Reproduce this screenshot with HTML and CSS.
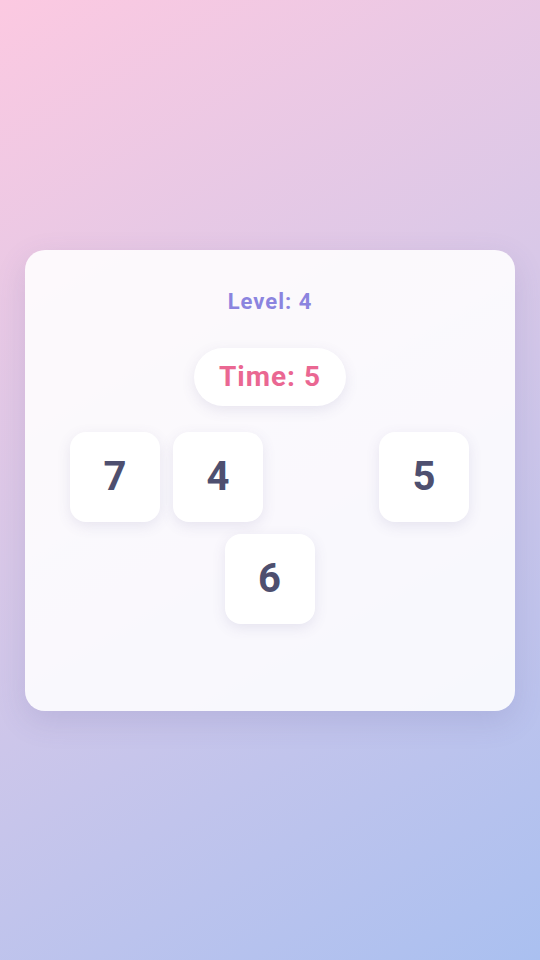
FILE: index.html
```html
<!DOCTYPE html>
<html lang="en">
<head>
  <meta charset="UTF-8" />
  <meta name="viewport" content="width=device-width, initial-scale=1.0"/>
  <title>Number Memory</title>
  <link rel="stylesheet" href="styles.css">
</head>
<body>

<div class="card">
  <div class="level">Level: 4</div>
  <div class="timer">Time: 5</div>
  <div class="tiles">
    <div class="tile">7</div>
    <div class="tile">4</div>
    <div class="tile empty"></div>
    <div class="tile">5</div>
    <div class="tile">6</div>
  </div>
</div>

</body>
</html>
```
FILE: styles.css
```css
body {
  font-family: Roboto, "Liberation Sans", sans-serif;
  background: linear-gradient(150deg, #fcc9e1 0%, #d8c8e8 45%, #aac0f0 100%);
  margin: 0;
  height: 960px;
  display: flex;
  justify-content: center;
  align-items: center;
}
.card {
  width: 490px;
  box-sizing: border-box;
  padding: 40px 0 87px;
  background: rgba(255,255,255,0.88);
  border-radius: 20px;
  box-shadow: 0 10px 30px rgba(90,80,140,0.15);
  display: flex;
  flex-direction: column;
  align-items: center;
}
.level {
  font-size: 22px;
  font-weight: bold;
  letter-spacing: 1px;
  color: #8b84df;
  line-height: 24px;
}
.timer {
  margin-top: 34px;
  padding: 14px 25px;
  background: #fff;
  border-radius: 30px;
  font-size: 28px;
  font-weight: bold;
  letter-spacing: 1px;
  line-height: 30px;
  color: #ea6792;
  box-shadow: 0 4px 14px rgba(90,80,140,0.12);
}
.tiles {
  margin-top: 26px;
  width: 399px;
  margin-right: 1px;
  display: flex;
  flex-wrap: wrap;
  justify-content: center;
  gap: 12px 13px;
}
.tile {
  width: 90px;
  height: 90px;
  background: #fff;
  border-radius: 16px;
  box-shadow: 0 4px 14px rgba(90,80,140,0.12);
  display: flex;
  justify-content: center;
  align-items: center;
  font-size: 40px;
  font-weight: bold;
  color: #4e4f6f;
}
.empty {
  visibility: hidden;
}
```
